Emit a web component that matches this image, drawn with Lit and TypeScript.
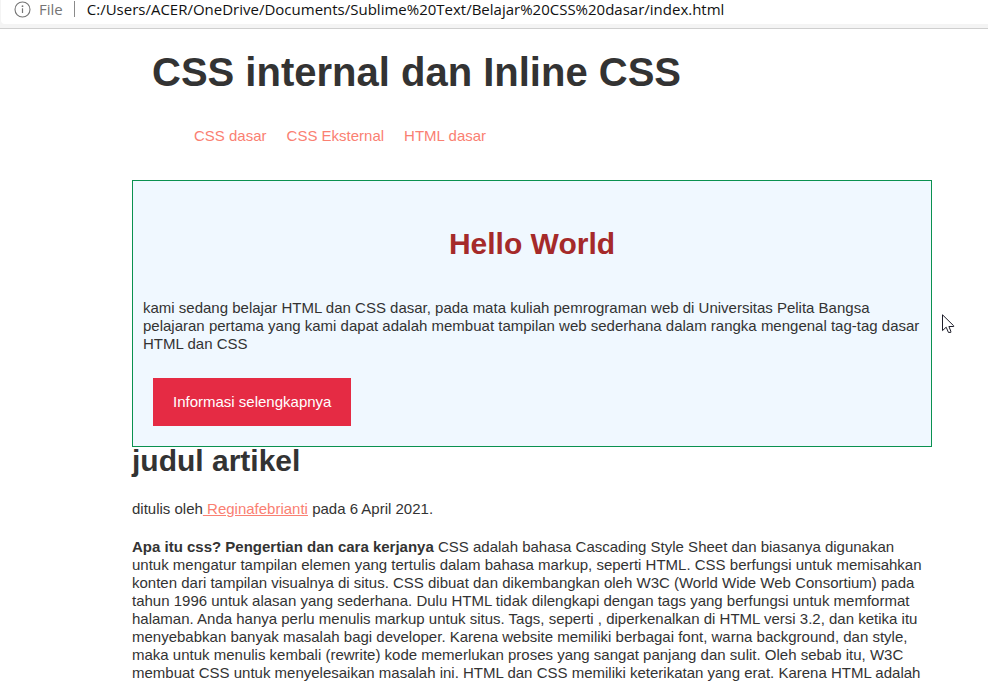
import { LitElement, html, css } from "lit";
import { customElement } from "lit/decorators.js";

const NAV_LINKS = ["CSS dasar", "CSS Eksternal", "HTML dasar"];

@customElement("address-bar")
class AddressBar extends LitElement {
  static styles = css`
    :host {
      display: block;
      height: 28px;
      background: #f4f4f4;
      border-bottom: 1px solid #cfcfcf;
      font-family: "Open Sans", "Noto Sans", sans-serif;
      font-size: 15px;
    }
    .field {
      display: flex;
      align-items: center;
      height: 24px;
      margin-left: 1px;
      padding: 0 0 6px 13px;
      box-sizing: border-box;
      background: #fff;
      border-radius: 0 0 0 4px;
    }
    .info {
      display: flex;
      align-items: center;
      gap: 8px;
      padding: 0;
      border: 0;
      background: none;
      color: #757575;
      font: inherit;
      line-height: 20px;
    }
    .icon {
      display: block;
    }
    .rule {
      width: 1px;
      height: 16px;
      margin: 0 12px 0 11px;
      background: #8a8a8a;
    }
    .url {
      flex: 1;
      min-width: 0;
      height: 20px;
      padding: 0;
      border: 0;
      outline: 0;
      background: none;
      color: #111;
      font: inherit;
      line-height: 20px;
    }
  `;

  render() {
    return html`
      <div class="field">
        <button class="info" type="button">
          <svg class="icon" width="17" height="17" viewBox="0 0 17 17" fill="none" aria-hidden="true">
            <circle cx="8.5" cy="8.5" r="7.5" stroke="#757575" stroke-width="1.1" />
            <path d="M8.5 7.3v4.7" stroke="#757575" stroke-width="1.2" />
            <circle cx="8.5" cy="5.2" r="0.9" fill="#757575" />
          </svg>
          <span>File</span>
        </button>
        <span class="rule"></span>
        <input
          class="url"
          type="text"
          aria-label="Address"
          value="C:/Users/ACER/OneDrive/Documents/Sublime%20Text/Belajar%20CSS%20dasar/index.html"
        />
      </div>
    `;
  }
}

@customElement("app-root")
class AppRoot extends LitElement {
  static styles = css`
    :host {
      display: block;
      position: relative;
      background: #fff;
      color: #333;
      font-family: "Liberation Sans", Arial, sans-serif;
      font-size: 15px;
      line-height: 18px;
    }
    .page {
      max-width: 800px;
      padding: 0 56px 0 132px;
    }
    header {
      padding: 18px 20px 0;
    }
    h1,
    h2,
    p {
      margin: 0;
    }
    .title {
      font-size: 40px;
      line-height: 50px;
    }
    nav {
      display: flex;
      gap: 20px;
      padding: 30px 42px 35px;
    }
    a {
      color: #fa8072;
    }
    nav a {
      text-decoration: none;
    }
    .hero {
      padding: 45px 10px 20px;
      border: 1px solid #0a9150;
      background: #f0f8ff;
    }
    .hello {
      margin-bottom: 37px;
      color: #a52a2a;
      font-size: 30px;
      line-height: 36px;
      text-align: center;
    }
    .more {
      display: block;
      margin: 25px 0 0 10px;
      padding: 15px 20px;
      border: 0;
      background: #e52b44;
      color: #fff;
      font: inherit;
    }
    .heading {
      margin-bottom: 25px;
      font-size: 30px;
      line-height: 28px;
    }
    .byline {
      margin-bottom: 20px;
    }
    .cursor {
      position: absolute;
      left: 942px;
      top: 314px;
    }
  `;

  render() {
    return html`
      <address-bar></address-bar>
      <div class="page">
        <header>
          <h1 class="title">CSS internal dan Inline CSS</h1>
          <nav>${NAV_LINKS.map((label) => html`<a href="#">${label}</a>`)}</nav>
        </header>
        <section class="hero">
          <h2 class="hello">Hello World</h2>
          <p>
            kami sedang belajar HTML dan CSS dasar, pada mata kuliah pemrograman web di Universitas
            Pelita Bangsa pelajaran pertama yang kami dapat adalah membuat tampilan web sederhana
            dalam rangka mengenal tag-tag dasar HTML dan CSS
          </p>
          <button class="more" type="button">Informasi selengkapnya</button>
        </section>
        <article>
          <h2 class="heading">judul artikel</h2>
          <p class="byline">ditulis oleh<a href="#"> Reginafebrianti</a> pada 6 April 2021.</p>
          <p>
            <b>Apa itu css? Pengertian dan cara kerjanya</b> CSS adalah bahasa Cascading Style Sheet
            dan biasanya digunakan untuk mengatur tampilan elemen yang tertulis dalam bahasa markup,
            seperti HTML. CSS berfungsi untuk memisahkan konten dari tampilan visualnya di situs. CSS
            dibuat dan dikembangkan oleh W3C (World Wide Web Consortium) pada tahun 1996 untuk alasan
            yang sederhana. Dulu HTML tidak dilengkapi dengan tags yang berfungsi untuk memformat
            halaman. Anda hanya perlu menulis markup untuk situs. Tags, seperti , diperkenalkan di
            HTML versi 3.2, dan ketika itu menyebabkan banyak masalah bagi developer. Karena website
            memiliki berbagai font, warna background, dan style, maka untuk menulis kembali (rewrite)
            kode memerlukan proses yang sangat panjang dan sulit. Oleh sebab itu, W3C membuat CSS
            untuk menyelesaikan masalah ini. HTML dan CSS memiliki keterikatan yang erat. Karena HTML
            adalah
          </p>
        </article>
      </div>
      <svg class="cursor" width="13" height="20" viewBox="0 0 13 20" aria-hidden="true">
        <path
          d="M0.5 0.8V16.6L4.2 13.2L6.4 18.4H8.8V17.2L6.9 12.5H11.7V11.8Z"
          fill="#fff"
          stroke="#1c1c28"
          stroke-width="1"
        />
      </svg>
    `;
  }
}
